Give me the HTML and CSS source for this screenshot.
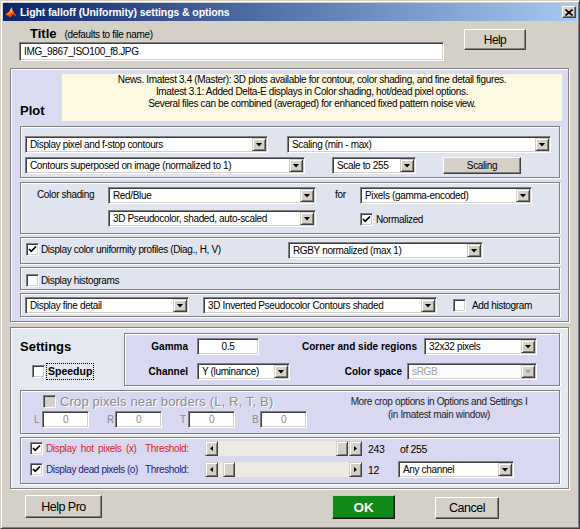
FILE: index.html
```html
<!DOCTYPE html>
<html>
<head>
<meta charset="utf-8">
<title>Light falloff (Uniformity) settings &amp; options</title>
<link rel="stylesheet" href="styles.css">
</head>
<body>
<div class="window">
  <div class="titlebar">
    <svg class="appicon" viewBox="0 0 12 12" width="12" height="12">
      <path d="M0.5 8.5 L4.5 5.5 L6.5 1 L8.5 5 L11.5 10.5 L8 8.5 L5.5 11.5 Z" fill="#e0461a"/>
      <path d="M4.5 5.5 L6.5 1 L7.6 7.5 Z" fill="#f6c820"/>
      <path d="M0.5 8.5 L4.5 5.5 L5.5 8 Z" fill="#f39a22"/>
    </svg>
    <span class="tb-text">Light falloff (Uniformity) settings &amp; options</span>
    <div class="tb-close"><svg width="8" height="7" viewBox="0 0 8 7"><path d="M0.5 0.5L7.5 6.5M7.5 0.5L0.5 6.5" stroke="#000" stroke-width="1.6"/></svg></div>
  </div>

  <div class="top">
    <div class="title-col">
      <div class="title-lbl"><span class="title-b">Title</span><span class="hint">(defaults to file name)</span></div>
      <div class="field w-title">IMG_9867_ISO100_f8.JPG</div>
    </div>
    <div class="btn help">Help</div>
  </div>

  <div class="panel plot">
    <div class="plot-head">
      <div class="plot-lbl">Plot</div>
      <div class="news">News. Imatest 3.4 (Master): 3D plots available for contour, color shading, and fine detail figures.<br>Imatest 3.1: Added Delta-E displays in Color shading, hot/dead pixel options.<br>Several files can be combined (averaged) for enhanced fixed pattern noise view.</div>
    </div>

    <div class="panel sub sub1">
      <div class="row">
        <div class="dd w243"><span class="dd-t">Display pixel and f-stop contours</span><span class="dd-b"><i class="tri"></i></span></div>
        <div class="dd w264 ml19"><span class="dd-t">Scaling (min - max)</span><span class="dd-b"><i class="tri"></i></span></div>
      </div>
      <div class="row">
        <div class="dd w280"><span class="dd-t">Contours superposed on image (normalized to 1)</span><span class="dd-b"><i class="tri"></i></span></div>
        <div class="dd w84 ml27"><span class="dd-t">Scale to 255</span><span class="dd-b"><i class="tri"></i></span></div>
        <div class="btn scaling ml27">Scaling</div>
      </div>
    </div>

    <div class="panel sub sub2">
      <div class="lbl-cs">Color shading</div>
      <div class="col">
        <div class="dd w208"><span class="dd-t">Red/Blue</span><span class="dd-b"><i class="tri"></i></span></div>
        <div class="dd w208"><span class="dd-t">3D Pseudocolor, shaded, auto-scaled</span><span class="dd-b"><i class="tri"></i></span></div>
      </div>
      <div class="lbl-for">for</div>
      <div class="col">
        <div class="dd w172"><span class="dd-t">Pixels (gamma-encoded)</span><span class="dd-b"><i class="tri"></i></span></div>
        <div class="cbrow norm"><span class="cb"><svg class="chk" viewBox="0 0 9 9" width="9" height="9"><path d="M1 4 L3.2 6.3 L8 1.5" fill="none" stroke="#000" stroke-width="1.7"/></svg></span><span class="cbt g3">Normalized</span></div>
      </div>
    </div>

    <div class="panel sub sub3">
      <div class="cbrow w262 mt1"><span class="cb"><svg class="chk" viewBox="0 0 9 9" width="9" height="9"><path d="M1 4 L3.2 6.3 L8 1.5" fill="none" stroke="#000" stroke-width="1.7"/></svg></span><span class="cbt">Display color uniformity profiles (Diag., H, V)</span></div>
      <div class="dd w195"><span class="dd-t">RGBY normalized (max 1)</span><span class="dd-b"><i class="tri"></i></span></div>
    </div>

    <div class="panel sub sub4">
      <div class="cbrow"><span class="cb"></span><span class="cbt">Display histograms</span></div>
    </div>

    <div class="panel sub sub5">
      <div class="dd w164"><span class="dd-t">Display fine detail</span><span class="dd-b"><i class="tri"></i></span></div>
      <div class="dd w234 ml14"><span class="dd-t">3D Inverted Pseudocolor Contours shaded</span><span class="dd-b"><i class="tri"></i></span></div>
      <div class="cbrow ml16"><span class="cb"></span><span class="cbt g4">Add histogram</span></div>
    </div>
  </div>

  <div class="panel settings">
    <div class="set-top">
      <div class="set-left">
        <div class="set-title">Settings</div>
        <div class="speed"><span class="cb"></span><span class="focus">Speedup</span></div>
      </div>
      <div class="panel gamma">
        <div class="grow">
          <span class="glbl gl1">Gamma</span>
          <div class="field w62 ml9 center">0.5</div>
          <span class="glbl gl2">Corner and side regions</span>
          <div class="dd w113 ml7"><span class="dd-t">32x32 pixels</span><span class="dd-b"><i class="tri"></i></span></div>
        </div>
        <div class="grow mt8">
          <span class="glbl gl1">Channel</span>
          <div class="dd w93 ml9"><span class="dd-t">Y (luminance)</span><span class="dd-b"><i class="tri"></i></span></div>
          <span class="glbl gl3">Color space</span>
          <div class="dd w130 ml5 disabled"><span class="dd-t">sRGB</span><span class="dd-b"><i class="tri"></i></span></div>
        </div>
      </div>
    </div>

    <div class="panel crop">
      <div class="crop-left">
        <div class="crop-cb"><span class="cb dis"></span><span class="crop-t">Crop pixels near borders (L, R, T, B)</span></div>
        <div class="crop-in">
          <span class="cl">L</span><div class="field cin">0</div>
          <span class="cl ml18">R</span><div class="field cin">0</div>
          <span class="cl ml18">T</span><div class="field cin">0</div>
          <span class="cl ml17">B</span><div class="field cin">0</div>
        </div>
      </div>
      <div class="crop-right">More crop options in Options and Settings I<br>(in Imatest main window)</div>
    </div>

    <div class="panel hot">
      <div class="hrow">
        <span class="cb"><svg class="chk" viewBox="0 0 9 9" width="9" height="9"><path d="M1 4 L3.2 6.3 L8 1.5" fill="none" stroke="#000" stroke-width="1.7"/></svg></span>
        <span class="hl red">Display hot pixels (x)</span>
        <span class="thr red">Threshold:</span>
        <div class="slider">
          <span class="sarrow"><i class="tl"></i></span>
          <span class="track t117"></span>
          <span class="thumb"></span>
          <span class="track t1"></span>
          <span class="sarrow"><i class="tr"></i></span>
        </div>
        <span class="val">243</span>
        <span class="of">of 255</span>
      </div>
      <div class="hrow mt4">
        <span class="cb"><svg class="chk" viewBox="0 0 9 9" width="9" height="9"><path d="M1 4 L3.2 6.3 L8 1.5" fill="none" stroke="#000" stroke-width="1.7"/></svg></span>
        <span class="hl blue">Display dead pixels (o)</span>
        <span class="thr blue">Threshold:</span>
        <div class="slider">
          <span class="sarrow"><i class="tl"></i></span>
          <span class="track t5"></span>
          <span class="thumb"></span>
          <span class="track t113"></span>
          <span class="sarrow"><i class="tr"></i></span>
        </div>
        <span class="val">12</span>
        <div class="dd w116"><span class="dd-t">Any channel</span><span class="dd-b"><i class="tri"></i></span></div>
      </div>
    </div>
  </div>

  <div class="btns">
    <div class="btn helppro">Help Pro</div>
    <div class="btn ok">OK</div>
    <div class="btn cancel">Cancel</div>
  </div>
</div>
</body>
</html>
```

FILE: styles.css
```css
* { box-sizing: border-box; }
html, body { margin: 0; padding: 0; background: #d4d0c8; }
body {
  font-family: "Liberation Sans", Arial, sans-serif;
  font-size: 10px;
  letter-spacing: -0.35px;
  color: #000;
}
.window {
  width: 580px;
  height: 529px;
  overflow: hidden;
  background: #d4d0c8;
  border: 1px solid;
  border-color: #d4d0c8 #404040 #404040 #d4d0c8;
  box-shadow: inset 1px 1px #fff, inset -1px -1px #808080;
  padding: 2px;
  display: flex;
  flex-direction: column;
}
/* title bar */
.titlebar {
  height: 18px;
  flex-shrink: 0;
  display: flex;
  align-items: center;
  padding-left: 2px;
  background: linear-gradient(to right, #0a246a, #a6caf0);
  color: #fff;
}
.appicon { width: 12px; height: 12px; margin-right: 3px; flex-shrink: 0; }
.tb-text {
  flex: 1;
  font: bold 10.5px "Liberation Sans", Arial, sans-serif;
  letter-spacing: -0.1px;
  white-space: nowrap;
}
.tb-close {
  width: 14px; height: 12px; margin-right: 1px;
  display: flex; align-items: center; justify-content: center;
  background: #d4d0c8;
  border: 1px solid;
  border-color: #fff #404040 #404040 #fff;
  box-shadow: inset -1px -1px #808080;
}
/* generic */
.btn {
  display: flex; align-items: center; justify-content: center;
  flex-shrink: 0;
  background: #d4d0c8;
  border: 1px solid;
  border-color: #fff #404040 #404040 #fff;
  box-shadow: inset -1px -1px #808080;
  white-space: nowrap;
}
.field {
  flex-shrink: 0;
  height: 17px;
  background: #fff;
  border: 1px solid;
  border-color: #808080 #fff #fff #808080;
  box-shadow: inset 1px 1px #404040, inset -1px -1px #d4d0c8;
  padding-left: 4px;
  line-height: 15px;
  white-space: nowrap;
}
.center { text-align: center; padding-left: 0; }
.panel {
  border: 1px solid #808080;
  box-shadow: inset 1px 1px #fff, 1px 1px 0 #fff;
}
.dd {
  flex-shrink: 0;
  display: flex;
  height: 17px;
  padding: 1px;
  background: #fff;
  border: 1px solid;
  border-color: #808080 #fff #fff #808080;
  box-shadow: inset 1px 1px #404040, inset -1px -1px #d4d0c8;
}
.dd-t { flex: 1; padding-left: 3px; line-height: 13px; white-space: nowrap; overflow: hidden; }
.dd-b {
  width: 14px; height: 13px;
  flex-shrink: 0;
  display: flex; align-items: center; justify-content: center;
  background: #d4d0c8;
  border: 1px solid;
  border-color: #d4d0c8 #404040 #404040 #d4d0c8;
  box-shadow: inset 1px 1px #fff, inset -1px -1px #808080;
}
.tri { display: block; width: 7px; height: 4px; background: #000; clip-path: polygon(0 0, 100% 0, 50% 100%); }
.disabled .dd-t { color: #a0a0a0; }
.disabled { background: #fbfbfb; }
.disabled .tri { background: #a0a0a0; }
.cb {
  width: 13px; height: 13px;
  flex-shrink: 0;
  display: flex; align-items: center; justify-content: center;
  background: #fff;
  border: 1px solid;
  border-color: #808080 #fff #fff #808080;
  box-shadow: inset 1px 1px #404040, inset -1px -1px #d4d0c8;
}
.cb.dis { background: #d4d0c8; }
.chk { display: block; }
.cbrow { display: flex; align-items: center; gap: 2px; flex-shrink: 0; }
.cbt { line-height: 13px; white-space: nowrap; }
.g3 { margin-left: 1px; }
.g4 { margin-left: 2px; }
.row { display: flex; align-items: center; }

/* widths & spacing */
.w-title { width: 425px; height: 19px; line-height: 17px; padding-left: 4px; }
.w243 { width: 243px; } .w264 { width: 264px; } .w280 { width: 280px; }
.w84 { width: 84px; } .w208 { width: 208px; } .w172 { width: 172px; }
.w195 { width: 195px; } .w164 { width: 164px; } .w234 { width: 234px; }
.w113 { width: 113px; } .w93 { width: 93px; } .w130 { width: 130px; }
.w116 { width: 116px; } .w62 { width: 62px; } .w262 { width: 262px; }
.ml5 { margin-left: 5px; } .ml7 { margin-left: 7px; } .ml9 { margin-left: 9px; }
.ml14 { margin-left: 14px; } .ml16 { margin-left: 16px; } .ml17 { margin-left: 17px; }
.ml18 { margin-left: 18px; } .ml19 { margin-left: 19px; } .ml27 { margin-left: 27px; }
.mt1 { margin-top: 1px; } .mt4 { margin-top: 4px; } .mt8 { margin-top: 8px; }

/* top */
.top { display: flex; align-items: flex-start; padding-left: 16px; flex-shrink: 0; }
.title-lbl { height: 21px; padding-top: 5px; padding-left: 11px; line-height: 14px; white-space: nowrap; }
.title-b { font: bold 13px "Liberation Sans", Arial, sans-serif; letter-spacing: 0; }
.hint { margin-left: 8px; }
.help { margin-left: 20px; margin-top: 8px; width: 62px; height: 21px; font-size: 12px; letter-spacing: -0.6px; }

/* plot */
.plot {
  margin: 7px 8px 0 7px;
  background: #dadaf0;
  padding: 5px 8px 4px 9px;
  flex-shrink: 0;
}
.plot-head { display: flex; align-items: flex-end; height: 47px; }
.plot-lbl { width: 42px; flex-shrink: 0; font: bold 13px "Liberation Sans", Arial, sans-serif; letter-spacing: 0; line-height: 15px; margin-bottom: 3px; }
.news {
  width: 500px; height: 47px; flex-shrink: 0;
  background: #fcf8e2;
  text-align: center;
  line-height: 12px;
  white-space: nowrap;
}
.sub { background: #e0e4ee; }
.sub1 { margin-top: 5px; height: 52px; padding: 9px 0 0 4px; display: flex; flex-direction: column; gap: 4px; }
.scaling { width: 78px; height: 17px; }
.sub2 { margin-top: 4px; height: 52px; padding-top: 4px; display: flex; align-items: flex-start; }
.lbl-cs { width: 87px; flex-shrink: 0; padding-left: 16px; line-height: 15px; white-space: nowrap; }
.col { display: flex; flex-direction: column; gap: 6px; flex-shrink: 0; }
.lbl-for { width: 44px; flex-shrink: 0; padding-left: 19px; line-height: 15px; }
.norm { margin-top: 3px; }
.sub3 { margin-top: 3px; height: 27px; padding: 4px 0 0 5px; display: flex; align-items: flex-start; }
.sub4 { margin-top: 3px; height: 23px; padding: 4px 0 0 5px; display: flex; }
.sub5 { margin-top: 3px; height: 24px; padding: 3px 0 0 4px; display: flex; align-items: flex-start; }
.sub5 .cbrow { height: 17px; gap: 4px; }

/* settings */
.settings {
  margin: 5px 8px 0 7px;
  background: #e4e8f0;
  padding: 5px 8px 4px 9px;
  flex-shrink: 0;
}
.set-top { display: flex; }
.set-left { width: 104px; flex-shrink: 0; padding-top: 6px; }
.set-title { font: bold 13px "Liberation Sans", Arial, sans-serif; letter-spacing: 0; line-height: 16px; }
.speed { display: flex; align-items: center; height: 17px; margin-top: 8px; margin-left: 12px; }
.focus {
  margin-left: 1px;
  border: 1px dotted #000;
  padding: 0 1px;
  font: bold 10.5px "Liberation Sans", Arial, sans-serif;
  letter-spacing: 0;
  line-height: 15px;
}
.gamma { width: 436px; height: 53px; flex-shrink: 0; background: #d8d8f0; padding-top: 4px; }
.grow { display: flex; align-items: center; height: 17px; }
.glbl { font: bold 10px "Liberation Sans", Arial, sans-serif; letter-spacing: 0; text-align: right; flex-shrink: 0; white-space: nowrap; }
.gl1 { width: 63px; }
.gl2 { width: 158px; }
.gl3 { width: 112px; }

.crop { margin-top: 4px; height: 44px; background: #d8d8f0; padding-top: 4px; display: flex; }
.crop-left { width: 303px; flex-shrink: 0; }
.crop-cb { display: flex; align-items: center; gap: 4px; height: 13px; padding-left: 22px; }
.crop-t { font: 13px "Liberation Sans", Arial, sans-serif; letter-spacing: 0.15px; color: #8c8c8c; text-shadow: 1px 1px 0 #fff; white-space: nowrap; line-height: 13px; }
.crop-in { display: flex; align-items: center; height: 17px; margin-top: 3px; padding-left: 13px; }
.cl { width: 8px; flex-shrink: 0; color: #8c8c8c; line-height: 15px; }
.cin { width: 47px; text-align: center; padding-left: 0; color: #8c8c8c; }
.crop-right { width: 230px; flex-shrink: 0; text-align: center; line-height: 13px; color: #222; white-space: nowrap; }

.hot { margin-top: 3px; height: 47px; background: #d8d8f0; padding: 2px 0 0 9px; }
.hrow { display: flex; align-items: center; height: 17px; }
.hl { width: 99px; flex-shrink: 0; margin-left: 3px; white-space: nowrap; word-spacing: 2px; }
.thr { width: 60px; flex-shrink: 0; white-space: nowrap; }
.red { color: #dc1c1c; }
.blue { color: #1a237e; }
.blue.hl { word-spacing: 0; letter-spacing: -0.4px; }
.slider { display: flex; width: 157px; height: 15px; flex-shrink: 0; }
.sarrow, .thumb {
  flex-shrink: 0;
  width: 13px; height: 15px;
  display: flex; align-items: center; justify-content: center;
  background: #d4d0c8;
  border: 1px solid;
  border-color: #d4d0c8 #404040 #404040 #d4d0c8;
  box-shadow: inset 1px 1px #fff, inset -1px -1px #808080;
}
.thumb { width: 12px; }
.track { height: 15px; background: #ece9e3; flex-shrink: 0; }
.t117 { width: 118px; } .t1 { width: 1px; } .t5 { width: 5px; } .t113 { width: 114px; }
.tl, .tr { display: block; width: 3px; height: 5px; background: #000; }
.tl { clip-path: polygon(100% 0, 100% 100%, 0 50%); }
.tr { clip-path: polygon(0 0, 0 100%, 100% 50%); }
.val { width: 30px; margin-left: 6px; flex-shrink: 0; font-size: 10.5px; }
.of { margin-left: 2px; font-size: 10.5px; }

/* bottom buttons */
.btns { display: flex; align-items: flex-start; margin-top: 6px; flex-shrink: 0; }
.helppro { margin-left: 22px; width: 77px; height: 23px; font-size: 12.5px; letter-spacing: -0.5px; }
.ok {
  margin-left: 230px; width: 63px; height: 24px;
  background: #128a1a;
  color: #fff;
  font: bold 13.5px "Liberation Sans", Arial, sans-serif;
  letter-spacing: 0;
  border-color: #b8d8b8 #1a1a1a #1a1a1a #b8d8b8;
  box-shadow: inset -1px -1px #0a5a0e;
}
.cancel { margin-left: 40px; margin-top: 2px; width: 64px; height: 22px; font-size: 12.5px; letter-spacing: -0.5px; }
```
